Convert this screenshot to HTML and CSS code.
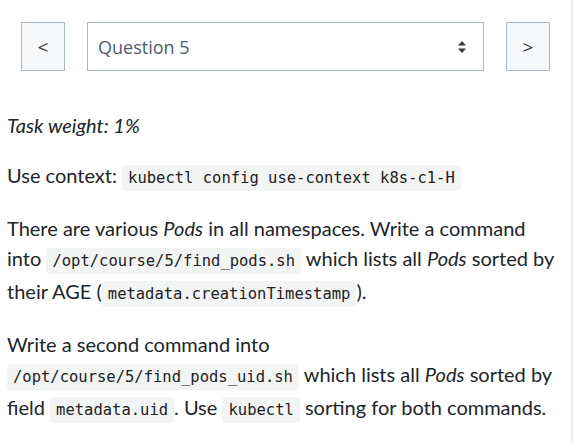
FILE: index.html
```html
<!DOCTYPE html>
<html>
<head>
<meta charset="utf-8">
<link rel="stylesheet" href="styles.css">
</head>
<body>
<div class="page">
  <div class="nav">
    <button class="nav-btn">&lt;</button>
    <div class="select">
      <span>Question 5</span>
      <svg class="caret" width="10" height="14" viewBox="0 0 10 14"><path d="M1 5.5 L5 1 L9 5.5 Z" fill="#343a40"/><path d="M1 8.5 L5 13 L9 8.5 Z" fill="#343a40"/></svg>
    </div>
    <button class="nav-btn">&gt;</button>
  </div>
  <div class="content">
    <p class="weight"><em>Task weight: 1%</em></p>
    <p>Use context: <code>kubectl config use-context k8s-c1-H</code></p>
    <p>There are various <em>Pods</em> in all namespaces. Write a command into <code>/opt/course/5/find_pods.sh</code> which lists all <em>Pods</em> sorted by their AGE (<code>metadata.creationTimestamp</code>).</p>
    <p>Write a second command into <code>/opt/course/5/find_pods_uid.sh</code> which lists all <em>Pods</em> sorted by field <code>metadata.uid</code>. Use <code>kubectl</code> sorting for both commands.</p>
  </div>
</div>
</body>
</html>
```
FILE: styles.css
```css
html, body {
  margin: 0;
  padding: 0;
  background: #fff;
}
.page {
  width: 571px;
  height: 443px;
  border-right: 2px solid #ececec;
  font-family: "Lato", "Open Sans", sans-serif;
  color: #212529;
}
.nav {
  display: flex;
  gap: 22px;
  padding: 22px 21px 0 21px;
  height: 49px;
}
.nav-btn {
  width: 44px;
  height: 49px;
  background: #f7f8fa;
  border: 1px solid #a9b6c6;
  border-radius: 0;
  font-family: "Open Sans", sans-serif;
  font-size: 19px;
  color: #333;
  padding: 0;
}
.select {
  flex: 1;
  display: flex;
  align-items: center;
  justify-content: space-between;
  border: 1px solid #a9b6c6;
  padding: 0 16px 0 10px;
  font-family: "Open Sans", sans-serif;
  font-size: 18px;
  color: #4c5c6c;
  background: #fff;
}
.content {
  padding: 39px 9px 0 7px;
  font-size: 20px;
  line-height: 30px;
}
.content p {
  margin: 0 0 20px 0;
}
code {
  font-family: "DejaVu Sans Mono", monospace;
  font-size: 15.5px;
  background: #f3f4f4;
  border-radius: 4px;
  padding: 4px 6px;
  color: #222;
}
```
